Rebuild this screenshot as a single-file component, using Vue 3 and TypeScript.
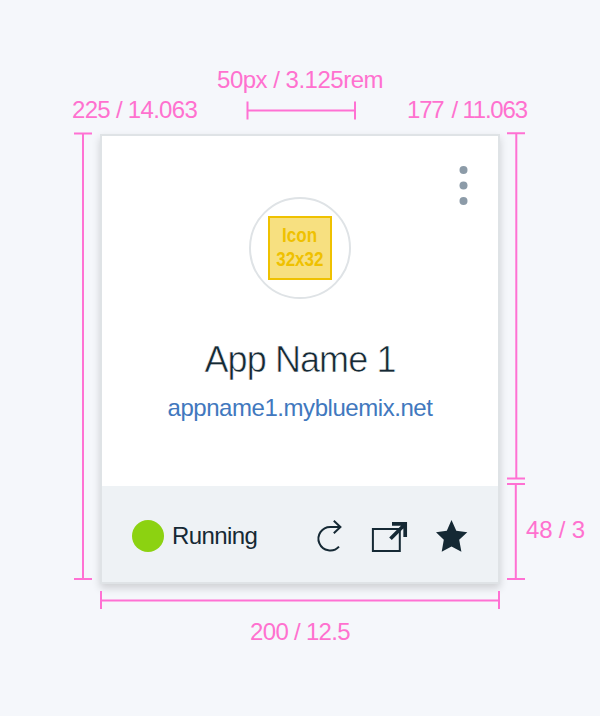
<script setup lang="ts">
const appName = 'App Name 1'
const route = 'appname1.mybluemix.net'
const status = 'Running'
const dots: number[] = [5, 20.5, 36]
</script>

<template>
  <main class="sheet">
    <div class="label icon-size">50px / 3.125rem</div>
    <div class="top-row">
      <span class="label total">225 / 14.063</span>
      <svg class="gauge icon-gauge" width="110" height="19" viewBox="0 0 110 19">
        <path d="M1.5 .5V18.5M109 .5V18.5M1.5 9.5H109" />
      </svg>
      <span class="label body-size"><span>177</span><span>/ 11.063</span></span>
    </div>

    <div class="middle">
      <svg class="gauge left-gauge" width="18" height="448" viewBox="0 0 18 448">
        <path d="M0 1.4H18M9 1.4V447M0 447H18" />
      </svg>
      <article class="card">
        <section class="body">
          <svg class="menu" width="10" height="41" viewBox="0 0 10 41">
            <circle v-for="y in dots" :key="y" cx="5.5" :cy="y" r="4" />
          </svg>
          <div class="avatar">
            <div class="placeholder"><span>Icon</span><span>32x32</span></div>
          </div>
          <h1>{{ appName }}</h1>
          <a class="route">{{ route }}</a>
        </section>
        <footer>
          <i class="lamp"></i>
          <span class="status">{{ status }}</span>
          <svg class="actions" width="156" height="40" viewBox="312 516 156 40">
            <path class="line" d="M339 546.6A11.8 11.8 0 1 1 330.5 526.9H340.5M333.8 520.8L340.4 526.9L333.8 533.2" />
            <path class="line box" d="M372.9 529.1H399.8V550.9H372.9Z" />
            <path class="arrow" d="M390.5 538.7L404.5 524.7M392 523.8H405.2V537" />
            <path class="star" d="M451.5 520L456.3 530.7L467.3 532.2L459.2 539.8L461.4 551.7L451.5 546.6L441.7 551.7L443.8 539.8L436 532.2L446.8 530.7Z" />
          </svg>
        </footer>
      </article>
      <div class="right-side">
        <svg class="gauge" width="18" height="448" viewBox="0 0 18 448">
          <path d="M0 1.3H18M9.3 1.3V346.4M0 346.4H18M0 352H18M8.8 352V447M0 447H18" />
        </svg>
        <span class="label footer-size">48 / 3</span>
      </div>
    </div>

    <svg class="gauge width-gauge" width="400" height="18" viewBox="0 0 400 18">
      <path d="M1 0V18M399 0V18M1 9.5H399" />
    </svg>
    <div class="label width-size">200 / 12.5</div>
  </main>
</template>

<style>
body {
  background: #f5f7fb;
}
</style>

<style scoped>
.sheet {
  box-sizing: border-box;
  width: 600px;
  height: 716px;
  padding-top: 66px;
  overflow: hidden;
  background: #f5f7fb;
  font-family: "Liberation Sans", Arial, sans-serif;
}
.label {
  display: block;
  color: #ff71cf;
  font-size: 24px;
  line-height: 28px;
  white-space: pre;
}
.gauge {
  display: block;
  flex: none;
  fill: none;
  stroke: #ff71d3;
  stroke-width: 2;
}
.icon-size {
  text-align: center;
  letter-spacing: -0.5px;
}
.top-row {
  display: flex;
  height: 38px;
  padding-left: 72px;
  padding-top: 1px;
  box-sizing: border-box;
}
.top-row .label {
  padding-top: 1px;
}
.total {
  width: 174px;
  letter-spacing: -0.7px;
}
.icon-gauge {
  margin-top: 6px;
}
.top-row .body-size {
  display: flex;
  gap: 8px;
  margin-left: 51px;
  letter-spacing: -1.2px;
}
.middle {
  display: flex;
  height: 452px;
  padding-left: 74px;
}
.card {
  flex: none;
  box-sizing: border-box;
  width: 400px;
  height: 450px;
  margin: 2px 7px 0 8px;
  border: 2px solid #dfe3e6;
  background: #fff;
  box-shadow: 0 4px 8px rgba(0, 0, 0, 0.16);
}
.body {
  display: flex;
  flex-direction: column;
  align-items: center;
  height: 350px;
}
.menu {
  align-self: flex-end;
  flex: none;
  margin: 29px 30px 0 0;
  fill: #8c9ba8;
}
.avatar {
  display: flex;
  align-items: center;
  justify-content: center;
  flex: none;
  box-sizing: border-box;
  width: 102px;
  height: 102px;
  margin-top: -9px;
  border: 2px solid #dfe3e6;
  border-radius: 50%;
}
.placeholder {
  display: flex;
  flex-direction: column;
  align-items: center;
  box-sizing: border-box;
  width: 64px;
  height: 64px;
  padding-top: 5px;
  border: 2px solid #efc100;
  background: #f7e080;
  color: #efc100;
  font: bold 20px/24px "Liberation Sans", sans-serif;
}
.placeholder span {
  transform: scaleX(0.85);
}
h1 {
  margin: 41px 0 0;
  color: #152934;
  font-size: 36px;
  font-weight: 400;
  line-height: 40px;
  letter-spacing: -0.9px;
  -webkit-text-stroke: 0.6px #fff;
}
.route {
  margin-top: 14px;
  color: #4178be;
  font-size: 24px;
  line-height: 28px;
  letter-spacing: -0.45px;
}
footer {
  display: flex;
  align-items: center;
  box-sizing: border-box;
  height: 96px;
  padding: 4px 30px 0;
  background: #eef2f5;
}
.lamp {
  width: 32px;
  height: 32px;
  border-radius: 50%;
  background: #8cd211;
}
.status {
  margin-left: 8px;
  color: #152934;
  font-size: 24px;
  letter-spacing: -0.6px;
}
.actions {
  margin-left: auto;
}
.line {
  fill: none;
  stroke: #152934;
  stroke-width: 2;
}
.arrow {
  fill: none;
  stroke: #152934;
  stroke-width: 3.7;
}
.star {
  fill: #152934;
}
.right-side {
  display: flex;
}
.footer-size {
  margin: 384px 0 0 1px;
  letter-spacing: -0.2px;
}
.width-gauge {
  margin: 7px 0 0 100px;
}
.width-size {
  margin-top: 9px;
  text-align: center;
  letter-spacing: -0.7px;
}
</style>
